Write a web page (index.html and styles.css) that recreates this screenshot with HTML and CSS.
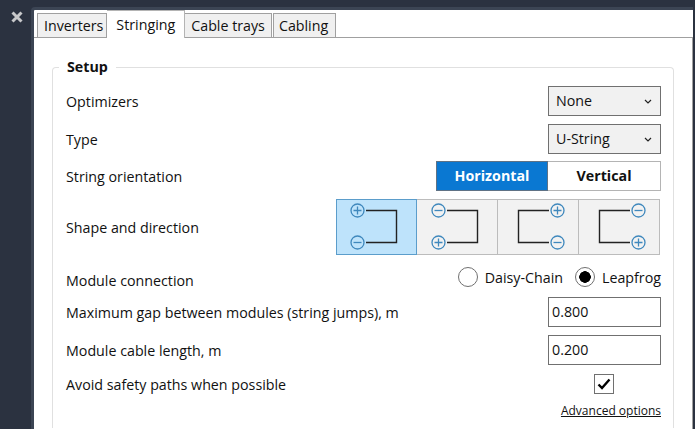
FILE: index.html
```html
<!DOCTYPE html>
<html lang="en">
  <head>
    <meta charset="UTF-8" />
    <title>Stringing</title>
    <link rel="stylesheet" href="styles.css">
  </head>
  <body>
    <div class="close">
      <svg width="14" height="14" viewBox="0 0 14 14"><path d="M2.5 2.5 L11.5 11.5 M11.5 2.5 L2.5 11.5" /></svg>
    </div>
    <div class="panel">
      <div class="tabs">
        <div class="tab first">Inverters</div>
        <div class="tab active">Stringing</div>
        <div class="tab">Cable trays</div>
        <div class="tab last">Cabling</div>
      </div>
      <div class="body">
        <fieldset class="setup">
          <legend>Setup</legend>
          <div class="row row-opt">
            <span>Optimizers</span>
            <div class="select">None<svg width="8" height="5" viewBox="0 0 8 5"><path d="M1 1 L4 4 L7 1" /></svg></div>
          </div>
          <div class="row row-type">
            <span>Type</span>
            <div class="select">U-String<svg width="8" height="5" viewBox="0 0 8 5"><path d="M1 1 L4 4 L7 1" /></svg></div>
          </div>
          <div class="row row-orient">
            <span>String orientation</span>
            <div class="toggle">
              <div class="toggle-item on">Horizontal</div>
              <div class="toggle-item">Vertical</div>
            </div>
          </div>
          <div class="row row-shape">
            <span>Shape and direction</span>
            <div class="shapes">
              <div class="shape selected">
                <svg width="80" height="54" viewBox="0 0 80 54">
                  <path class="wire" d="M29 10.5 H59.5 V42.5 H29" />
                  <circle class="pole" cx="20.5" cy="10.5" r="6.5" /><path class="pole" d="M16.5 10.5 H24.5 M20.5 6.5 V14.5" />
                  <circle class="pole" cx="20.5" cy="42.5" r="6.5" /><path class="pole" d="M16.5 42.5 H24.5" />
                </svg>
              </div>
              <div class="shape">
                <svg width="80" height="54" viewBox="0 0 80 54">
                  <path class="wire" d="M30 10.5 H60.5 V42.5 H30" />
                  <circle class="pole" cx="21.5" cy="10.5" r="6.5" /><path class="pole" d="M17.5 10.5 H25.5" />
                  <circle class="pole" cx="21.5" cy="42.5" r="6.5" /><path class="pole" d="M17.5 42.5 H25.5 M21.5 38.5 V46.5" />
                </svg>
              </div>
              <div class="shape">
                <svg width="80" height="54" viewBox="0 0 80 54">
                  <path class="wire" d="M51 10.5 H20.5 V42.5 H51" />
                  <circle class="pole" cx="59.5" cy="10.5" r="6.5" /><path class="pole" d="M55.5 10.5 H63.5 M59.5 6.5 V14.5" />
                  <circle class="pole" cx="59.5" cy="42.5" r="6.5" /><path class="pole" d="M55.5 42.5 H63.5" />
                </svg>
              </div>
              <div class="shape">
                <svg width="80" height="54" viewBox="0 0 80 54">
                  <path class="wire" d="M51 10.5 H20.5 V42.5 H51" />
                  <circle class="pole" cx="59.5" cy="10.5" r="6.5" /><path class="pole" d="M55.5 10.5 H63.5" />
                  <circle class="pole" cx="59.5" cy="42.5" r="6.5" /><path class="pole" d="M55.5 42.5 H63.5 M59.5 38.5 V46.5" />
                </svg>
              </div>
            </div>
          </div>
          <div class="row row-conn">
            <span>Module connection</span>
            <div class="radios">
              <div class="radio"><i class="dot"></i>Daisy-Chain</div>
              <div class="radio"><i class="dot checked"></i>Leapfrog</div>
            </div>
          </div>
          <div class="row row-gap">
            <span>Maximum gap between modules (string jumps), m</span>
            <div class="input">0.800</div>
          </div>
          <div class="row row-len">
            <span>Module cable length, m</span>
            <div class="input">0.200</div>
          </div>
          <div class="row row-avoid">
            <span>Avoid safety paths when possible</span>
            <div class="check-cell">
              <div class="check">
                <svg width="14" height="12" viewBox="0 0 14 12"><path d="M1.5 6.5 L5 10 L12.5 1.5" /></svg>
              </div>
            </div>
          </div>
          <div class="advanced"><a href="#">Advanced options</a></div>
        </fieldset>
      </div>
    </div>
  </body>
</html>
```

FILE: styles.css
```css
html,
body {
  margin: 0;
  height: 100%;
  overflow: hidden;
}
body {
  background-color: #2b3240;
  font-family: "Open Sans", "Noto Sans", sans-serif;
  font-size: 14.25px;
  color: #111;
  display: flex;
  padding: 7px 0 0 10px;
  box-sizing: border-box;
}
.close {
  width: 14px;
  height: 14px;
  margin-right: 7px;
  margin-top: 2px;
  flex: none;
}
.close path {
  stroke: #c8c9cb;
  stroke-width: 3;
  fill: none;
}
.panel {
  flex: 1;
  margin-right: 2px;
  display: flex;
  flex-direction: column;
  border-left: 3px solid #3c4554;
  border-top: 3px solid #3c4554;
  border-top-left-radius: 4px;
  background-color: #fff;
  min-width: 0;
}
.tabs {
  display: flex;
  align-items: flex-end;
  height: 27px;
  flex: none;
  padding-left: 3px;
  border-bottom: 1px solid #a0a0a0;
}
.tab {
  height: 25px;
  box-sizing: border-box;
  margin-bottom: -1px;
  padding: 0 6px;
  line-height: 23px;
  background-color: #f0f0f0;
  border: 1px solid #a0a0a0;
  border-left-width: 0;
}
.tab.first {
  padding-right: 3px;
  border-left-width: 1px;
}
.tab.last {
  margin-left: 1px;
  padding: 0 7px 0 5px;
  border-left-width: 1px;
}
.tab.active {
  height: 28px;
  line-height: 27px;
  padding: 0 9px;
  background-color: #fff;
  border-bottom: 0;
  border-color: #b4b4b4;
}
.body {
  flex: 1;
  padding: 19px 18px 0 18px;
  border-right: 1px solid #a0a0a0;
}
.setup {
  margin: 0;
  padding: 9px 12px 0 13px;
  border: 1px solid #e0e0e0;
  border-bottom: 0;
  border-radius: 4px 4px 0 0;
  height: 371px;
  box-sizing: border-box;
}
.setup legend {
  padding: 0 8px;
  margin-left: -7px;
  font-weight: 700;
  line-height: 20px;
}
.row {
  display: flex;
  justify-content: space-between;
  align-items: center;
}
.row-opt {
  margin-bottom: 8px;
}
.row-type {
  margin-bottom: 7px;
}
.row-orient {
  margin-bottom: 8px;
}
.row-shape {
  margin-bottom: 7px;
}
.row-conn {
  height: 30px;
  margin-bottom: 5px;
}
.row-conn > span {
  margin-top: 6px;
}
.row-gap {
  margin-bottom: 8px;
}
.row-len {
  margin-bottom: 9px;
}
.select {
  width: 113px;
  height: 30px;
  box-sizing: border-box;
  border: 1px solid #707070;
  background-color: #f1f1f1;
  padding: 0 8px 0 7px;
  line-height: 28px;
  display: flex;
  justify-content: space-between;
  align-items: center;
}
.select path {
  stroke: #222;
  stroke-width: 1.2;
  fill: none;
}
.toggle {
  display: flex;
  height: 30px;
}
.toggle-item {
  width: 113px;
  box-sizing: border-box;
  border: 1px solid #b4b4b4;
  border-left: 0;
  font-weight: 700;
  text-align: center;
  line-height: 28px;
}
.toggle-item.on {
  width: 112px;
  background-color: #0a78d2;
  border: 1px solid #5f7285;
  color: #fff;
}
.shapes {
  display: flex;
  margin-right: 1px;
}
.shape {
  width: 81px;
  height: 56px;
  box-sizing: border-box;
  background-color: #f2f2f2;
  border: 1px solid #bcbcbc;
  border-left-width: 0;
}
.shape:first-child {
  border-left-width: 1px;
}
.shape.selected {
  background-color: #bee3fb;
  border-color: #5b9dcb;
}
.shape svg {
  display: block;
}
.wire {
  stroke: #222;
  stroke-width: 1.4;
  fill: none;
}
.pole {
  stroke: #3f88bd;
  stroke-width: 1.3;
  fill: none;
}
.radios {
  display: flex;
  gap: 12px;
}
.radio {
  display: flex;
  align-items: center;
  gap: 7px;
}
.dot {
  display: block;
  width: 20px;
  height: 20px;
  box-sizing: border-box;
  border: 1px solid #707070;
  border-radius: 50%;
  background-color: #fff;
}
.dot.checked {
  background: radial-gradient(circle, #000 0 5.5px, #fff 6px);
}
.input {
  width: 113px;
  height: 30px;
  box-sizing: border-box;
  border: 1px solid #707070;
  padding-left: 3px;
  line-height: 28px;
}
.check-cell {
  width: 114px;
  display: flex;
  justify-content: center;
}
.check {
  width: 20px;
  height: 20px;
  box-sizing: border-box;
  border: 1px solid #707070;
  display: flex;
  align-items: center;
  justify-content: center;
}
.check path {
  stroke: #000;
  stroke-width: 2.4;
  fill: none;
}
.advanced {
  margin-top: 9px;
  text-align: right;
  font-size: 12px;
  line-height: 16px;
}
.advanced a {
  color: #111;
}
```
